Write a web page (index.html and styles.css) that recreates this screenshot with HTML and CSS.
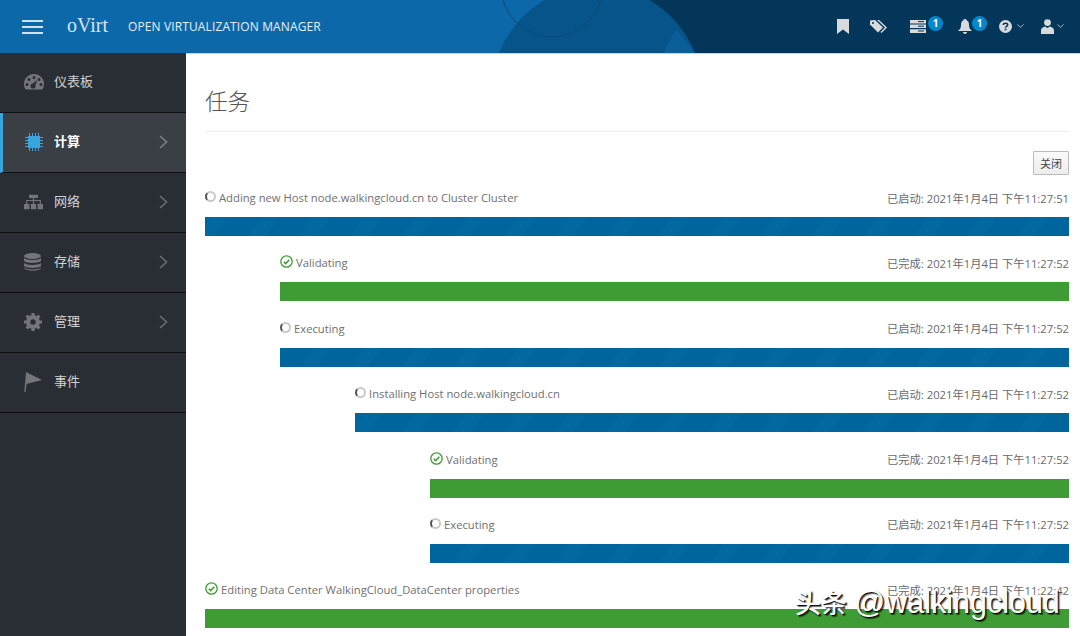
FILE: index.html
```html
<!DOCTYPE html>
<html lang="zh-CN">
<head>
    <meta charset="UTF-8">
    <title>任务 - oVirt</title>
    <link rel="stylesheet" href="styles.css">
</head>
<body>
    <div class="topbar">
        <svg class="topbar-bg" width="1080" height="53" viewBox="0 0 1080 53">
            <rect x="620" y="0" width="460" height="53" fill="#04365a"/>
            <circle cx="597" cy="91" r="105" fill="#07548a"/>
            <path d="M676 30 Q686 41 695 53 L664 53 Q668 42 676 30Z" fill="#0a5f98"/>
            <circle cx="552" cy="-14" r="51" fill="none" stroke="#0b4a78" stroke-width="1"/>
        </svg>
        <div class="burger"><span></span><span></span><span></span></div>
        <div class="logo">oVirt</div>
        <div class="product">OPEN VIRTUALIZATION MANAGER</div>
        <div class="top-icons">
            <svg class="ti-bookmark" width="12" height="15" viewBox="0 0 12 15"><path d="M0 0H12V15L6 10.5L0 15Z" fill="#d8dbde"/></svg>
            <svg class="ti-tag" width="18" height="15" viewBox="0 0 18 15"><path d="M0 1.5V5.5L8 13.5L13 8.5L5 1Z" fill="#d8dbde"/><path d="M7 1L9 1L17 8.5L11.5 14L10.5 13L15 8.5Z" fill="#d8dbde"/><circle cx="3" cy="4" r="1" fill="#04365a"/></svg>
            <div class="ti-badged ti-tasks">
                <svg width="16" height="13" viewBox="0 0 16 13"><path d="M0 0H16V3.4H0ZM0 4.6H16V8H0ZM0 9.2H16V13H0Z" fill="#d8dbde"/><path d="M8 1.6H14M8 6.2H14M8 11H14" stroke="#04365a" stroke-width="1"/></svg>
                <span class="badge">1</span>
            </div>
            <div class="ti-badged ti-bell">
                <svg width="14" height="15" viewBox="0 0 14 15"><path d="M7 0C8 0 8.500 .6 8.500 1.300C10.500 2 11 4 11 6C11 9 12 10.500 14 12H0C2 10.500 3 9 3 6C3 4 3.500 2 5.500 1.300C5.500 .6 6 0 7 0ZM5 13H9C9 14.200 8 15 7 15C6 15 5 14.200 5 13Z" fill="#d8dbde"/></svg>
                <span class="badge">1</span>
            </div>
            <div class="ti-menu ti-help">
                <svg width="13" height="13" viewBox="0 0 12 12"><circle cx="6" cy="6" r="6" fill="#d8dbde"/><path d="M4 4.600C4 3.400 5 3 6 3C7.200 3 8 3.600 8 4.500C8 5.800 6 5.800 6 7.200" fill="none" stroke="#04365a" stroke-width="1.400"/><rect x="5.200" y="8" width="1.600" height="1.500" fill="#04365a"/></svg>
                <svg class="caret" width="7" height="4" viewBox="0 0 7 4"><path d="M.5 .5L3.500 3.300L6.500 .5" fill="none" stroke="#aab4bc" stroke-width="1"/></svg>
            </div>
            <div class="ti-menu">
                <svg width="13" height="15" viewBox="0 0 13 15"><circle cx="6.500" cy="3.600" r="3.400" fill="#d8dbde"/><path d="M0 15V11.500C0 9 2.500 8 4 7.600L6.500 9L9 7.600C10.500 8 13 9 13 11.500V15Z" fill="#d8dbde"/></svg>
                <svg class="caret" width="7" height="4" viewBox="0 0 7 4"><path d="M.5 .5L3.500 3.300L6.500 .5" fill="none" stroke="#aab4bc" stroke-width="1"/></svg>
            </div>
        </div>
    </div>

    <div class="layout">
        <div class="sidebar">
            <a class="nav-item">
                <svg class="nav-icon" width="20" height="16" viewBox="0 0 20 16"><path fill-rule="evenodd" d="M10 0C15.500 0 20 4.400 20 10C20 12 19.400 14 18.400 15.500H1.600C.6 14 0 12 0 10C0 4.400 4.500 0 10 0ZM10 2A1.500 1.500 0 1 0 10 5A1.500 1.500 0 1 0 10 2ZM5 4A1.500 1.500 0 1 0 5 7A1.500 1.500 0 1 0 5 4ZM15 4A1.500 1.500 0 1 0 15 7A1.500 1.500 0 1 0 15 4ZM3 9A1.500 1.500 0 1 0 3 12A1.500 1.500 0 1 0 3 9ZM17 9A1.500 1.500 0 1 0 17 12A1.500 1.500 0 1 0 17 9ZM13 6L9 9.500A2.500 2.500 0 1 0 11.500 11.500Z" fill="#72767b"/></svg>
                <span>仪表板</span>
            </a>
            <a class="nav-item active">
                <svg class="nav-icon" width="18" height="18" viewBox="0 0 18 18"><rect x="3" y="3" width="12" height="12" fill="#39a5dc"/><path d="M0 4.500H3M0 7.500H3M0 10.500H3M0 13.500H3M15 4.500H18M15 7.500H18M15 10.500H18M15 13.500H18M4.500 0V3M7.500 0V3M10.500 0V3M13.500 0V3M4.500 15V18M7.500 15V18M10.500 15V18M13.500 15V18" stroke="#39a5dc" stroke-width="1"/></svg>
                <span>计算</span>
                <svg class="chevron" width="9" height="14" viewBox="0 0 9 14"><path d="M1 1L7.500 7L1 13" fill="none" stroke="#7d8187" stroke-width="1.600"/></svg>
            </a>
            <a class="nav-item">
                <svg class="nav-icon" width="19" height="15" viewBox="0 0 19 15"><path d="M5 0H14V3.500H5ZM0 9.500H5.400V15H0ZM6.800 9.500H12.200V15H6.800ZM13.600 9.500H19V15H13.600Z" fill="#72767b"/><path d="M2.700 9.500V6H16.300V9.500M9.500 3.500V9.500" fill="none" stroke="#72767b" stroke-width="1.200"/></svg>
                <span>网络</span>
                <svg class="chevron" width="9" height="14" viewBox="0 0 9 14"><path d="M1 1L7.500 7L1 13" fill="none" stroke="#6b6f75" stroke-width="1.600"/></svg>
            </a>
            <a class="nav-item">
                <svg class="nav-icon" width="17" height="18" viewBox="0 0 17 18"><ellipse cx="8.500" cy="3" rx="8.500" ry="3" fill="#72767b"/><path d="M0 5C2 7.500 15 7.500 17 5V8C15 10.500 2 10.500 0 8ZM0 10C2 12.500 15 12.500 17 10V13C15 15.500 2 15.500 0 13ZM0 14.500C2 17 15 17 17 14.500V15C15 18.700 2 18.700 0 15Z" fill="#72767b"/></svg>
                <span>存储</span>
                <svg class="chevron" width="9" height="14" viewBox="0 0 9 14"><path d="M1 1L7.500 7L1 13" fill="none" stroke="#6b6f75" stroke-width="1.600"/></svg>
            </a>
            <a class="nav-item">
                <svg class="nav-icon" width="18" height="18" viewBox="0 0 18 18"><circle cx="9" cy="9" r="5" fill="none" stroke="#72767b" stroke-width="4"/><path d="M9 0V18M0 9H18M2.600 2.600L15.400 15.400M15.400 2.600L2.600 15.400" stroke="#72767b" stroke-width="3.200"/><circle cx="9" cy="9" r="2.700" fill="#292e34"/></svg>
                <span>管理</span>
                <svg class="chevron" width="9" height="14" viewBox="0 0 9 14"><path d="M1 1L7.500 7L1 13" fill="none" stroke="#6b6f75" stroke-width="1.600"/></svg>
            </a>
            <a class="nav-item">
                <svg class="nav-icon" width="18" height="20" viewBox="0 0 18 20"><path d="M2 0L18 8L2.500 12L1.700 20H.3Z" fill="#72767b"/></svg>
                <span>事件</span>
            </a>
        </div>

        <div class="main">
            <h1 class="page-title">任务</h1>
            <div class="toolbar"><button class="btn">关闭</button></div>

            <div class="task">
                <div class="task-head">
                    <div class="task-name"><i class="spinner"></i>Adding new Host node.walkingcloud.cn to Cluster Cluster</div>
                    <div class="task-time">已启动: 2021年1月4日 下午11:27:51</div>
                </div>
                <div class="bar bar-blue"></div>
                <div class="subtasks">
                    <div class="task">
                        <div class="task-head">
                            <div class="task-name"><svg class="check" width="13" height="13" viewBox="0 0 13 13"><circle cx="6.500" cy="6.500" r="5.700" fill="none" stroke="#3f9c35" stroke-width="1.300"/><path d="M3.800 6.700L5.700 8.600L9.300 4.800" fill="none" stroke="#3f9c35" stroke-width="1.500"/></svg>Validating</div>
                            <div class="task-time">已完成: 2021年1月4日 下午11:27:52</div>
                        </div>
                        <div class="bar bar-green"></div>
                    </div>
                    <div class="task">
                        <div class="task-head">
                            <div class="task-name"><i class="spinner"></i>Executing</div>
                            <div class="task-time">已启动: 2021年1月4日 下午11:27:52</div>
                        </div>
                        <div class="bar bar-blue"></div>
                        <div class="subtasks">
                            <div class="task">
                                <div class="task-head">
                                    <div class="task-name"><i class="spinner"></i>Installing Host node.walkingcloud.cn</div>
                                    <div class="task-time">已启动: 2021年1月4日 下午11:27:52</div>
                                </div>
                                <div class="bar bar-blue"></div>
                                <div class="subtasks">
                                    <div class="task">
                                        <div class="task-head">
                                            <div class="task-name"><svg class="check" width="13" height="13" viewBox="0 0 13 13"><circle cx="6.500" cy="6.500" r="5.700" fill="none" stroke="#3f9c35" stroke-width="1.300"/><path d="M3.800 6.700L5.700 8.600L9.300 4.800" fill="none" stroke="#3f9c35" stroke-width="1.500"/></svg>Validating</div>
                                            <div class="task-time">已完成: 2021年1月4日 下午11:27:52</div>
                                        </div>
                                        <div class="bar bar-green"></div>
                                    </div>
                                    <div class="task">
                                        <div class="task-head">
                                            <div class="task-name"><i class="spinner"></i>Executing</div>
                                            <div class="task-time">已启动: 2021年1月4日 下午11:27:52</div>
                                        </div>
                                        <div class="bar bar-blue"></div>
                                    </div>
                                </div>
                            </div>
                        </div>
                    </div>
                </div>
            </div>

            <div class="task">
                <div class="task-head">
                    <div class="task-name"><svg class="check" width="13" height="13" viewBox="0 0 13 13"><circle cx="6.500" cy="6.500" r="5.700" fill="none" stroke="#3f9c35" stroke-width="1.300"/><path d="M3.800 6.700L5.700 8.600L9.300 4.800" fill="none" stroke="#3f9c35" stroke-width="1.500"/></svg>Editing Data Center WalkingCloud_DataCenter properties</div>
                    <div class="task-time">已完成: 2021年1月4日 下午11:22:42</div>
                </div>
                <div class="bar bar-green"></div>
            </div>
        </div>
    </div>

    <div class="watermark">头条 <span class="watermark-name">@walkingcloud</span></div>
</body>
</html>
```

FILE: styles.css
```css
html, body {
    height: 636px;
    overflow: hidden;
}

body {
    margin: 0;
    background-color: #fff;
    font-family: 'Open Sans', 'Noto Sans CJK SC', sans-serif;
    font-size: 12px;
    color: #666;
    position: relative;
}

.topbar {
    position: relative;
    height: 53px;
    background-color: #0c68a8;
    display: flex;
    align-items: center;
    color: #e6f1f8;
    overflow: hidden;
}

.topbar-bg {
    position: absolute;
    left: 0;
    top: 0;
}

.burger {
    position: relative;
    width: 21px;
    margin-left: 22px;
    display: flex;
    flex-direction: column;
    gap: 4px;
}

.burger span {
    display: block;
    height: 2px;
    background-color: #cfe3f0;
}

.logo {
    position: relative;
    margin-left: 24px;
    font-family: 'Liberation Serif', serif;
    font-size: 20px;
    color: #d5e6f2;
    width: 61px;
    margin-top: -3px;
}

.product {
    position: relative;
    font-size: 12px;
    letter-spacing: 0.12px;
}

.top-icons {
    position: relative;
    margin-left: auto;
    display: flex;
    align-items: center;
    height: 53px;
    margin-top: -1px;
    padding-right: 16px;
}

.top-icons svg {
    display: block;
}

.ti-tag {
    margin-left: 21px;
}

.ti-badged {
    position: relative;
}

.ti-tasks {
    margin-left: 22px;
    margin-right: 32px;
}

.ti-bell {
    margin-right: 27px;
}

.badge {
    position: absolute;
    left: 100%;
    top: -4px;
    margin-left: 2px;
    width: 15px;
    height: 15px;
    border-radius: 50%;
    background-color: #0088ce;
    color: #fff;
    font-size: 10px;
    font-weight: 700;
    line-height: 15px;
    text-align: center;
}

.ti-bell .badge {
    margin-left: 0;
    top: -3px;
}

.ti-menu {
    display: flex;
    align-items: center;
    gap: 3px;
}

.ti-help {
    gap: 5px;
    margin-right: 17px;
}

.layout {
    display: flex;
    height: 583px;
}

.sidebar {
    width: 186px;
    flex-shrink: 0;
    background-color: #292e34;
}

.nav-item {
    display: flex;
    align-items: center;
    box-sizing: border-box;
    height: 60px;
    padding-left: 24px;
    padding-bottom: 2px;
    border-bottom: 1px solid #0d0f11;
    color: #d1d1d1;
    font-family: 'Noto Sans CJK SC', sans-serif;
    font-size: 13px;
    position: relative;
}

.nav-item.active {
    background-color: #393f44;
    color: #fff;
    font-weight: 700;
    border-left: 3px solid #39a5dc;
    padding-left: 21px;
}

.nav-icon {
    position: absolute;
    left: 24px;
    top: calc(50% - 1px);
    transform: translateY(-50%);
}

.nav-item.active .nav-icon {
    left: 22px;
}

.nav-item span {
    margin-left: 30px;
    margin-top: -2px;
}

.chevron {
    margin-left: auto;
    margin-right: 18px;
}

.main {
    flex: 1;
    padding: 0 11px 0 19px;
    min-width: 0;
}

.page-title {
    margin: 0 -11px 0 -19px;
    padding: 28px 11px 0 19px;
    height: 79px;
    box-sizing: border-box;
    border-top: 1px solid #bcd9ec;
    font-family: 'Noto Sans CJK SC', sans-serif;
    font-size: 22.5px;
    font-weight: 300;
    line-height: 36px;
    color: #555;
    position: relative;
}

.page-title::after {
    content: "";
    position: absolute;
    left: 19px;
    right: 11px;
    bottom: 0;
    height: 1px;
    background-color: #eee;
}

.toolbar {
    display: flex;
    justify-content: flex-end;
    padding-top: 19px;
    margin-bottom: 7px;
}

.btn {
    width: 36px;
    height: 24px;
    padding: 0;
    background: linear-gradient(#fafafa, #ededed);
    border: 1px solid #bbb;
    border-radius: 1px;
    color: #444;
    font-family: 'Noto Sans CJK SC', sans-serif;
    font-size: 11px;
}

.task-head {
    height: 31px;
    display: flex;
    justify-content: space-between;
    align-items: center;
}

.task-name {
    display: flex;
    align-items: center;
    color: #707070;
    font-size: 11.25px;
    white-space: nowrap;
}

.task-time {
    font-size: 11.25px;
    color: #6a6a6a;
    white-space: nowrap;
}

.spinner {
    display: block;
    box-sizing: border-box;
    width: 11px;
    height: 11px;
    margin-right: 3px;
    margin-top: -2px;
    border-radius: 50%;
    border: 2px solid #c9c9c9;
    border-left-color: #555;
}

.check {
    margin-right: 3px;
    margin-top: -2px;
}

.bar {
    height: 19px;
    margin-top: 4px;
    margin-bottom: 11.4px;
}

.bar-blue {
    background: repeating-linear-gradient(-55deg, #00659c 0, #00659c 28px, #02689f 28px, #02689f 42px);
}

.bar-green {
    background-color: #3f9c35;
}

.subtasks {
    padding-left: 75px;
}

.watermark {
    position: absolute;
    left: 795px;
    top: 584px;
    font-family: 'Liberation Sans', 'Noto Sans CJK SC', sans-serif;
    font-size: 26px;
    font-weight: 500;
    line-height: 36px;
    color: #fff;
    text-shadow: 1px 1px 1px #000, 2px 2px 1px rgba(0, 0, 0, .5);
    white-space: nowrap;
}

.watermark-name {
    font-size: 30.5px;
}
```
